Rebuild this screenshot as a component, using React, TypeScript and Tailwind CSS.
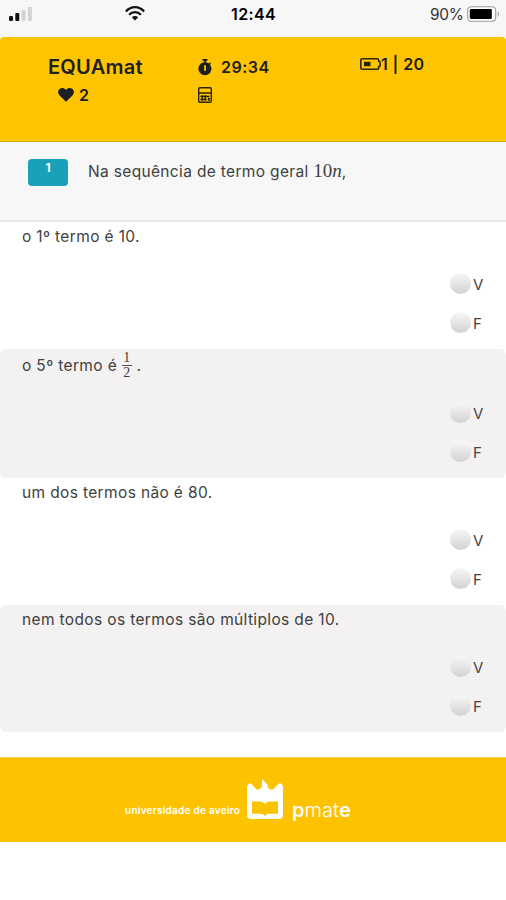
import type { ReactNode } from 'react';

type Statement = {
  id: number;
  text: ReactNode;
  className: string;
};

const statements: Statement[] = [
  { id: 1, text: 'o 1º termo é 10.', className: 'h-[127px] pt-[50px]' },
  {
    id: 2,
    text: (
      <>
        o 5º termo é <Fraction top="1" bottom="2" /> .
      </>
    ),
    className: 'h-[129px] pt-[52px] bg-[#f3f1f2]',
  },
  { id: 3, text: 'um dos termos não é 80.', className: 'h-[127px] pt-[50px]' },
  { id: 4, text: 'nem todos os termos são múltiplos de 10.', className: 'h-[127px] pt-[50px] bg-[#f3f1f2]' },
];

function Fraction({ top, bottom }: { top: string; bottom: string }) {
  return (
    <span className="mb-[2px] inline-flex h-4 w-[10px] flex-col items-center justify-center align-middle font-['Liberation_Serif',serif] text-[14px] leading-[14px] tracking-normal">
      <span>{top}</span>
      <span className="h-px w-full shrink-0 bg-[#555]" />
      <span>{bottom}</span>
    </span>
  );
}

function SignalIcon() {
  return (
    <svg className="h-4 w-6" viewBox="0 0 24 16">
      <rect x="0" y="10" width="4" height="5" rx="1.2" fill="#111" />
      <rect x="6.3" y="7" width="4" height="8" rx="1" fill="#111" />
      <rect x="12.6" y="4" width="4" height="11" rx="1" fill="#d2d2d2" />
      <rect x="18.9" y="1" width="4" height="14" rx="1" fill="#d2d2d2" />
    </svg>
  );
}

function WifiIcon() {
  return (
    <svg className="h-[15px] w-5" viewBox="0 0 20 15" fill="none" stroke="#111" strokeWidth="2.3">
      <path d="M.9 5.4C6-.2 14-.2 19.1 5.4" />
      <path d="M4.1 8.7c3.3-3.5 8.5-3.5 11.8 0" />
      <path d="M10 14.5 6.8 11.3c1.8-1.7 4.6-1.7 6.4 0Z" fill="#111" stroke="none" />
    </svg>
  );
}

function PhoneBatteryIcon() {
  return (
    <svg className="h-4 w-[33px]" viewBox="0 0 33 16">
      <rect x=".7" y=".7" width="28" height="14.6" rx="3.6" fill="#fff" stroke="#9b9b9b" strokeWidth="1.1" />
      <rect x="2.8" y="3" width="22" height="10" rx="1.2" fill="#000" />
      <path d="M30.7 5.5v5c1.7-.7 1.7-4.3 0-5Z" fill="#9b9b9b" />
    </svg>
  );
}

function StopwatchIcon() {
  return (
    <svg className="h-[17px] w-[14px]" viewBox="0 0 14 17">
      <path d="M4.5 0h5v1.8H8v1.5a6.4 6.4 0 0 1 2.7 1.1l1-1 1.3 1.3-1 1A6.5 6.5 0 1 1 6 3.3V1.8H4.5Z" fill="#1d2020" />
      <rect x="6.1" y="6" width="1.8" height="6" rx=".8" fill="#ffc400" />
    </svg>
  );
}

function HeartIcon() {
  return (
    <svg className="h-[14px] w-4" viewBox="0 0 16 14" fill="#1d2020">
      <path d="M8 13.8 1.3 7.2C-.5 5.2-.2 2.2 1.7.9 3.7-.5 6.2 0 8 2 9.8 0 12.3-.5 14.3.9c1.9 1.3 2.2 4.300.4 6.300Z" />
    </svg>
  );
}

function CalculatorIcon() {
  return (
    <svg className="h-4 w-[14px]" viewBox="0 0 14 16" fill="none" stroke="#2a2408">
      <rect x=".7" y=".7" width="12.6" height="14.6" rx="1.2" strokeWidth="1.4" />
      <path d="M1 6h12" strokeWidth="1.5" />
      <path d="M2.4 9.4h9" strokeWidth="1.5" />
      <path d="M2.4 12.6h6.200M4.200 8.300v5.500M7.300 8.300v5.500" strokeWidth="1.5" />
      <path d="M10.800 10.800v3" strokeWidth="2" />
    </svg>
  );
}

function ProgressBatteryIcon() {
  return (
    <svg className="h-3 w-[21px]" viewBox="0 0 21 12">
      <path
        d="M2.3.8h14.9q1.5 0 1.5 1.5v.9q1.4.2 1.4 1.3v3q0 1.100-1.400 1.300v.9q0 1.500-1.500 1.500H2.300Q.8 11.200.8 9.700V2.300Q.8.800 2.300.800Z"
        fill="none"
        stroke="#2a2408"
        strokeWidth="1.600"
      />
      <rect x="4" y="3.8" width="6.5" height="4.4" fill="#2a2408" />
    </svg>
  );
}

function BookLogo() {
  return (
    <svg className="h-[42px] w-[38px]" viewBox="0 0 38 42">
      <path
        d="M1 8.500Q3 4 5 5.500L10.500 11.500h2.500L16 8.700V1l5.800 6v2.500l2 2h3L33 5.500Q35.500 4 37 8.500V37q0 4-4 4H5q-4 0-4-4Z"
        fill="#fff"
      />
      <path
        d="M6 23.500h8.500q3 0 4.500 2.700 1.500-2.700 4.500-2.700H32V35.700h-9q-2.700 0-4 2.200-1.300-2.200-4-2.200H6Z"
        fill="#fac300"
      />
    </svg>
  );
}

function Option({ label }: { label: string }) {
  return (
    <label className="flex h-[22px] items-center text-[15px] text-[#444]">
      <span className="mr-[2px] size-[21px] rounded-full bg-linear-to-b from-[#f8f8f8] to-[#d2d2d2]" />
      <span className="w-[11px] pt-[3px] leading-5">{label}</span>
    </label>
  );
}

export default function App() {
  return (
    <div className="flex h-[900px] w-[506px] flex-col overflow-hidden bg-white font-['Inter',sans-serif] whitespace-nowrap text-[#3f3f3f]">
      <div className="flex h-[37px] shrink-0 bg-[#f7f7f7] text-black">
        <div className="w-[125px] pt-[6px] pl-[9px]">
          <SignalIcon />
        </div>
        <div className="w-[106px] pt-[6px]">
          <WifiIcon />
        </div>
        <div className="w-[199px] pt-[4px] text-base leading-5 font-semibold tracking-[0.4px]">12:44</div>
        <div className="pt-[5px] text-[15.5px] leading-5 tracking-[-0.3px] text-[#333]">90%</div>
        <div className="ml-auto pt-[6px] pr-[6px]">
          <PhoneBatteryIcon />
        </div>
      </div>

      <header className="flex h-[105px] shrink-0 rounded-t-[4px] border-b border-[#d9a800] bg-[#ffc400] font-semibold text-[#1d2020]">
        <div className="w-[198px] pt-[18px] pl-12">
          <h1 className="text-[20px] leading-6 tracking-[0.25px]">EQUAmat</h1>
          <div className="mt-[6px] flex items-center gap-[5px] pl-[10px] text-base leading-5">
            <HeartIcon />
            <span>2</span>
          </div>
        </div>
        <div className="w-[162px] pt-5">
          <div className="flex items-center gap-[9px] text-base leading-5 tracking-[0.5px]">
            <StopwatchIcon />
            <span>29:34</span>
          </div>
          <div className="mt-[10px]">
            <CalculatorIcon />
          </div>
        </div>
        <div className="flex h-10 items-start pt-[17px] text-base leading-5 tracking-[0.4px]">
          <span className="pt-[4px]">
            <ProgressBatteryIcon />
          </span>
          <span>1 | 20</span>
        </div>
      </header>

      <section className="flex h-[80px] shrink-0 border-b-2 border-[#e9e9e9] bg-[#f7f7f7] pt-[17px] pl-[28px]">
        <span className="h-[27px] w-10 shrink-0 rounded-[4px] bg-[#17a2b8] text-center text-xs leading-[17px] font-bold text-white">
          1
        </span>
        <p className="ml-[20px] text-[15.5px] leading-6 tracking-[0.34px]">
          Na sequência de termo geral{' '}
          <span className="font-['Liberation_Serif',serif] text-[19px] tracking-normal">
            10<i>n</i>
          </span>
          ,
        </p>
      </section>

      <main className="shrink-0">
        {statements.map((statement) => (
          <div key={statement.id} className={`flex justify-between rounded-[6px] pr-[22px] pl-[22px] ${statement.className}`}>
            <p className="-mt-[45px] h-5 text-[15.5px] leading-5 tracking-[0.36px]">{statement.text}</p>
            <div className="flex flex-col gap-[17px]">
              <Option label="V" />
              <Option label="F" />
            </div>
          </div>
        ))}
      </main>

      <footer className="mt-[25px] flex h-[85px] shrink-0 border-t border-[#f3c95a] bg-[#fdc300] pl-[125px] text-white">
        <span className="w-[121px] pt-[43px] text-[10px] leading-[18px] font-semibold tracking-[0.26px]">
          universidade de aveiro
        </span>
        <span className="pt-5">
          <BookLogo />
        </span>
        <span className="pt-[40px] pl-[8px] text-[20px] leading-6">
          <b className="font-semibold">p</b>
          <span className="font-light">mat</span>
          <b className="font-semibold">e</b>
        </span>
      </footer>
    </div>
  );
}
